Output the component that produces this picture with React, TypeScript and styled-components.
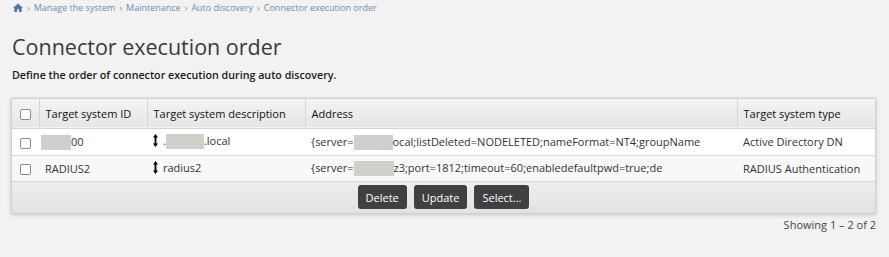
import React from "react";
import styled, { createGlobalStyle } from "styled-components";

const Global = createGlobalStyle`
  html, body { margin: 0; padding: 0; background: #f2f2f2; }
  body { font-family: "Open Sans", "Liberation Sans", sans-serif; color: #333; }
  *, *::before, *::after { box-sizing: border-box; }
`;

const Page = styled.div`
  padding: 0 13px 0 11px;
  display: flex;
  flex-direction: column;
`;

const Breadcrumb = styled.nav`
  display: flex;
  align-items: center;
  gap: 4px;
  height: 14px;
  padding-left: 2px;
  font-size: 9px;
  color: #6a8db3;
`;

const Sep = styled.span`
  color: #7b8a99;
  font-size: 9px;
`;

const Title = styled.h1`
  margin: 18px 0 0 1px;
  font-size: 21.5px;
  font-weight: 400;
  line-height: 30px;
  color: #3a3a3a;
`;

const Subtitle = styled.p`
  margin: 5px 0 0 1px;
  font-size: 10.7px;
  font-weight: 600;
  color: #1a1a1a;
  line-height: 16px;
`;

const Panel = styled.div`
  margin-top: 15px;
  border: 1px solid #cfcfcf;
  box-shadow: 0 1px 4px rgba(0, 0, 0, 0.18);
  background: #fff;
`;

const Table = styled.table`
  width: 100%;
  border-collapse: collapse;
  table-layout: fixed;
  font-size: 11px;
  color: #333;
`;

const HeadRow = styled.tr`
  height: 29px;
  background: linear-gradient(#f4f4f4, #e6e6e6);
  border-bottom: 1px solid #d4d4d4;
`;

const Th = styled.th<{ $w?: number }>`
  ${(p) => (p.$w ? `width: ${p.$w}px;` : "")}
  text-align: left;
  font-weight: 400;
  color: #111;
  padding: 0 6px;
  border-left: 1px solid #d6d6d6;
  white-space: nowrap;
  &:first-child { border-left: none; text-align: center; padding: 0; }
`;

const Row = styled.tr<{ $alt?: boolean; $h: number }>`
  height: ${(p) => p.$h}px;
  background: ${(p) => (p.$alt ? "#f8f8f8" : "#ffffff")};
  border-bottom: 1px solid #d8d8d8;
`;

const Td = styled.td`
  padding: 0 6px;
  white-space: nowrap;
  overflow: hidden;
  &:first-child { text-align: center; padding: 0; }
`;

const Check = styled.span`
  display: inline-block;
  width: 11px;
  height: 11px;
  border: 1px solid #8a8a8a;
  border-radius: 2px;
  background: #fff;
  vertical-align: middle;
`;

const Redact = styled.span<{ $w: number; $shift?: number }>`
  display: inline-block;
  width: ${(p) => p.$w}px;
  height: 15px;
  background: #cfcfcc;
  vertical-align: -4px;
  margin-left: ${(p) => p.$shift ?? 0}px;
`;

const Desc = styled.span`
  display: inline-flex;
  align-items: center;
  gap: 5px;
`;

const Footer = styled.div`
  height: 31px;
  background: linear-gradient(#eeeeee, #e2e2e2);
  display: flex;
  justify-content: center;
  align-items: center;
  gap: 7px;
`;

const Button = styled.button`
  height: 24px;
  padding: 0 8px;
  border: none;
  border-radius: 3px;
  background: #404040;
  color: #fff;
  font-family: "Open Sans", "Liberation Sans", sans-serif;
  font-size: 11px;
`;

const Showing = styled.div`
  text-align: right;
  font-size: 11px;
  color: #444;
  margin-top: 3px;
`;

const HomeIcon = () => (
  <svg width="10" height="9" viewBox="0 0 10 9">
    <path d="M5 0.5 L0 5 L1.3 5 L1.3 9 L4 9 L4 6.3 L6 6.3 L6 9 L8.7 9 L8.7 5 L10 5 Z" fill="#5079a5" />
  </svg>
);

const UpDown = () => (
  <svg width="5" height="13" viewBox="0 0 5 13">
    <path d="M2.5 0 L5 3.5 L3.4 3.5 L3.4 9.5 L5 9.5 L2.5 13 L0 9.5 L1.6 9.5 L1.6 3.5 L0 3.5 Z" fill="#000" />
  </svg>
);

export default function App() {
  return (
    <>
      <Global />
      <Page>
        <Breadcrumb>
          <HomeIcon />
          <Sep>›</Sep>
          <span>Manage the system</span>
          <Sep>›</Sep>
          <span>Maintenance</span>
          <Sep>›</Sep>
          <span>Auto discovery</span>
          <Sep>›</Sep>
          <span>Connector execution order</span>
        </Breadcrumb>
        <Title>Connector execution order</Title>
        <Subtitle>Define the order of connector execution during auto discovery.</Subtitle>
        <Panel>
          <Table>
            <thead>
              <HeadRow>
                <Th $w={27}><Check /></Th>
                <Th $w={108}>Target system ID</Th>
                <Th $w={158}>Target system description</Th>
                <Th>Address</Th>
                <Th $w={138}>Target system type</Th>
              </HeadRow>
            </thead>
            <tbody>
              <Row $h={27}>
                <Td><Check /></Td>
                <Td><Redact $w={30} $shift={-4} />00</Td>
                <Td>
                  <Desc><UpDown /><span>.<Redact $w={38} />.local</span></Desc>
                </Td>
                <Td>{"{server="}<Redact $w={39} />ocal;listDeleted=NODELETED;nameFormat=NT4;groupName</Td>
                <Td>Active Directory DN</Td>
              </Row>
              <Row $alt $h={26}>
                <Td><Check /></Td>
                <Td>RADIUS2</Td>
                <Td>
                  <Desc><UpDown /><span>radius2</span></Desc>
                </Td>
                <Td>{"{server="}<Redact $w={40} />z3;port=1812;timeout=60;enabledefaultpwd=true;de</Td>
                <Td>RADIUS Authentication</Td>
              </Row>
            </tbody>
          </Table>
          <Footer>
            <Button>Delete</Button>
            <Button>Update</Button>
            <Button>Select...</Button>
          </Footer>
        </Panel>
        <Showing>Showing 1 – 2 of 2</Showing>
      </Page>
    </>
  );
}
